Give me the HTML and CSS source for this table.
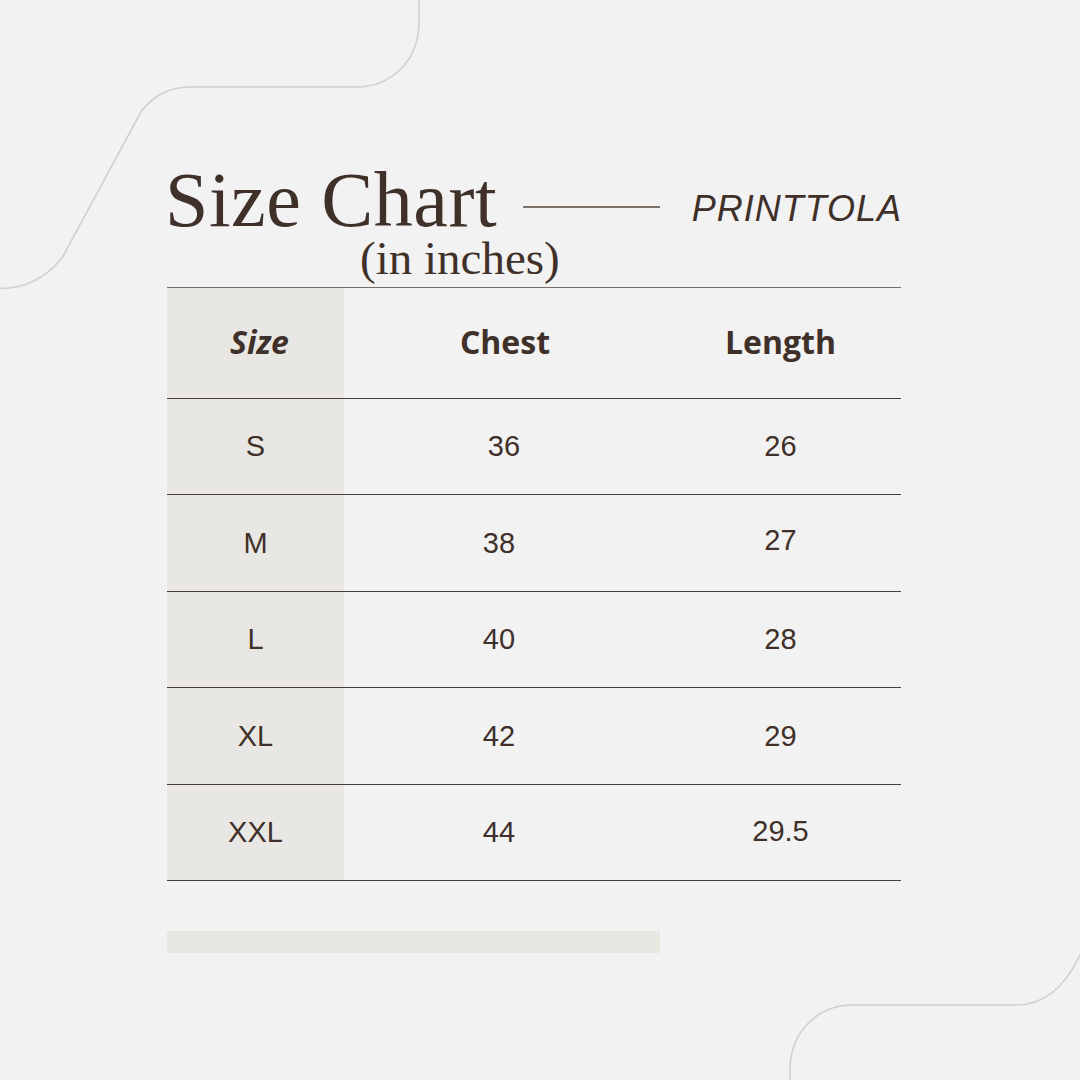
FILE: index.html
```html
<!DOCTYPE html>
<html lang="en">
<head>
<meta charset="utf-8">
<title>Size Chart - PRINTTOLA</title>
<link rel="stylesheet" href="styles.css">
</head>
<body>
<div class="canvas">
  <svg class="deco" width="1080" height="1080" viewBox="0 0 1080 1080" aria-hidden="true">
    <path d="M0 288.5 C 25 288.5 45 279 62 258 L 142 110 C 156 94 170 87 192 87 L 356 87 C 392 87 419 60 419 22 L 419 0" />
    <path d="M1080 955 C 1066 985 1046 1005 1016 1005 L 852 1005 C 818 1005 790 1032 790 1070 L 790 1080" />
  </svg>
  <main class="sheet">
    <header class="head">
      <div class="head-left">
        <h1 class="title">Size Chart</h1>
        <span class="rule"></span>
      </div>
      <div class="brand">PRINTTOLA</div>
      <div class="subtitle">(in inches)</div>
    </header>
    <section class="table">
      <div class="row row-head">
        <div class="cell c-size"><em>Size</em></div>
        <div class="cell">Chest</div>
        <div class="cell">Length</div>
      </div>
      <div class="row">
        <div class="cell c-size">S</div>
        <div class="cell"><span class="nudge-r">36</span></div>
        <div class="cell">26</div>
      </div>
      <div class="row row-tall">
        <div class="cell c-size">M</div>
        <div class="cell"><span class="nudge-l">38</span></div>
        <div class="cell"><span class="nudge-up">27</span></div>
      </div>
      <div class="row">
        <div class="cell c-size">L</div>
        <div class="cell"><span class="nudge-l">40</span></div>
        <div class="cell">28</div>
      </div>
      <div class="row row-tall">
        <div class="cell c-size">XL</div>
        <div class="cell"><span class="nudge-l">42</span></div>
        <div class="cell">29</div>
      </div>
      <div class="row">
        <div class="cell c-size">XXL</div>
        <div class="cell"><span class="nudge-l">44</span></div>
        <div class="cell"><span class="nudge-up2">29.5</span></div>
      </div>
    </section>
    <div class="bar"></div>
  </main>
</div>
</body>
</html>
```

FILE: styles.css
```css
html, body {
  margin: 0;
  padding: 0;
  background: #f2f2f2;
}
.canvas {
  position: relative;
  width: 1080px;
  height: 1080px;
  overflow: hidden;
  background: #f2f2f2;
  color: #3f3029;
}
.deco {
  position: absolute;
  left: 0;
  top: 0;
  fill: none;
  stroke: #d6cec8;
  stroke-width: 1.6;
}
.sheet {
  position: relative;
  width: 734px;
  margin-left: 167px;
  padding-top: 164px;
}
.head {
  display: grid;
  grid-template-columns: 493px 241px;
}
.head-left {
  display: flex;
  align-items: flex-start;
}
.title {
  margin: 0 0 0 -2px;
  font-family: "Liberation Serif", "Times New Roman", serif;
  font-weight: 400;
  font-size: 78px;
  line-height: 72px;
  letter-spacing: 0.5px;
  white-space: nowrap;
  color: #3f3029;
}
.subtitle {
  grid-column: 1 / -1;
  margin: 0 0 0 193px;
  font-family: "Liberation Serif", "Times New Roman", serif;
  font-size: 47px;
  line-height: 44px;
  white-space: nowrap;
  color: #3f3029;
}
.rule {
  flex: none;
  margin-left: auto;
  margin-top: 42px;
  width: 137px;
  height: 1.5px;
  background: #7d716b;
}
.brand {
  margin-top: 27px;
  text-align: right;
  font-family: "Liberation Sans", Arial, sans-serif;
  font-style: italic;
  font-size: 36px;
  line-height: 36px;
  letter-spacing: 1px;
  margin-right: -1px;
  color: #3f3029;
}
.table {
  margin-top: 7px;
  border-top: 1.5px solid #7a6d66;
}
.row {
  display: grid;
  grid-template-columns: 177px 316px 241px;
  height: 96px;
  box-sizing: border-box;
  border-bottom: 1px solid #4a3d37;
  font-family: "Liberation Sans", Arial, sans-serif;
  font-size: 29px;
  color: #3f3029;
}
.row-tall {
  height: 97px;
}
.row-head {
  height: 111px;
  font-family: "Open Sans", "Liberation Sans", sans-serif;
  font-weight: 700;
  font-size: 32px;
}
.row-head .cell {
  padding-bottom: 3px;
}
.cell {
  display: flex;
  align-items: center;
  justify-content: center;
}
.c-size {
  background: #e9e7e3;
}
.row-head .c-size {
  padding-left: 8px;
}
.row-head .cell:nth-child(2) {
  padding-left: 6px;
}
.nudge-r { margin-left: 4px; }
.nudge-l { margin-left: -6px; }
.nudge-up { margin-top: -6px; }
.nudge-up2 { margin-top: -2px; }
.bar {
  margin-top: 50px;
  width: 493px;
  height: 22px;
  background: #e8e6e1;
}
```
